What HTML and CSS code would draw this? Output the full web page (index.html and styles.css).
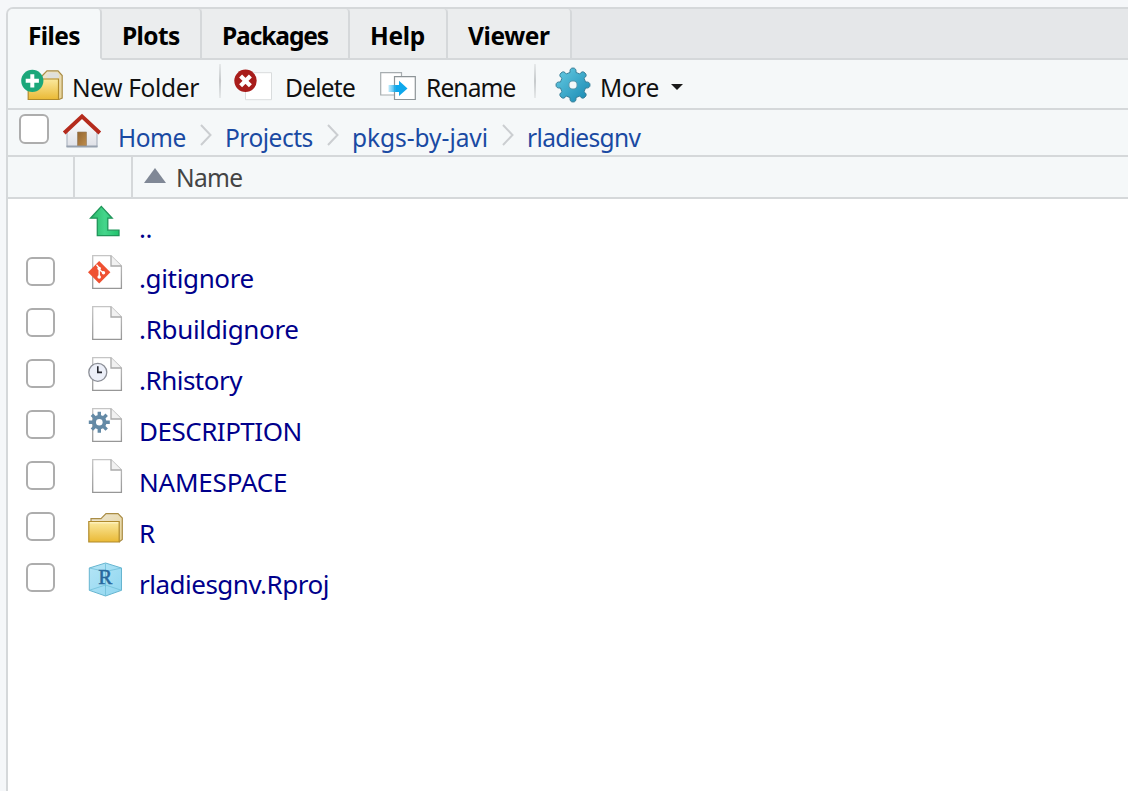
FILE: index.html
```html
<!DOCTYPE html>
<html lang="en">
<head>
<meta charset="utf-8">
<title>Files</title>
<link rel="stylesheet" href="styles.css">
</head>
<body>
<svg class="defs" aria-hidden="true">
  <defs>
    <linearGradient id="gold" x1="0" y1="0" x2="0" y2="1"><stop offset="0" stop-color="#fbe99e"/><stop offset="1" stop-color="#eab935"/></linearGradient>
    <linearGradient id="back" x1="0" y1="0" x2="1" y2="1"><stop offset="0" stop-color="#ece7d8"/><stop offset="1" stop-color="#e8d394"/></linearGradient>
    <linearGradient id="paper" x1="0" y1="0" x2="0" y2="1"><stop offset="0" stop-color="#c5c5c5"/><stop offset="1" stop-color="#979797"/></linearGradient>
    <linearGradient id="blue" x1="0" y1="0" x2="1" y2="1"><stop offset="0" stop-color="#68cde4"/><stop offset="1" stop-color="#1486b0"/></linearGradient>
    <linearGradient id="green" x1="0" y1="0" x2="1" y2="0"><stop offset="0" stop-color="#27b969"/><stop offset=".5" stop-color="#45d58b"/><stop offset="1" stop-color="#20c36c"/></linearGradient>
    <linearGradient id="arrow" x1="0" y1="0" x2="1" y2="0"><stop offset="0" stop-color="#5ecbf7" stop-opacity=".4"/><stop offset=".4" stop-color="#0fa8ec"/></linearGradient>
    <linearGradient id="door" x1="0" y1="0" x2="1" y2="1"><stop offset="0" stop-color="#94652f"/><stop offset="1" stop-color="#bd8c4c"/></linearGradient>
    <linearGradient id="wall" x1="0" y1="0" x2="0" y2="1"><stop offset="0" stop-color="#ffffff"/><stop offset="1" stop-color="#dfe1e7"/></linearGradient>
    <linearGradient id="cube" x1="0" y1="0" x2="1" y2="1"><stop offset="0" stop-color="#b5e5f6"/><stop offset="1" stop-color="#8fd6f0"/></linearGradient>
    <symbol id="page" viewBox="0 0 36 36">
      <path d="M4.7 1.7H23L33.4 12V34.3H4.7Z" fill="#fff" stroke="url(#paper)" stroke-width="1.3"/>
      <path d="M23 1.7V12H33.4" fill="#f1f1f1" stroke="#aaa" stroke-width="1.3"/>
    </symbol>
    <symbol id="folder" viewBox="0 0 36 36">
      <path d="M3 9V6.6H13L18 1.6H30L34.3 6V27.5L31 30" fill="url(#back)" stroke="#aa8d45" stroke-width="1.2"/>
      <path d="M.8 9.5H31.2V30H.8Z" fill="url(#gold)" stroke="#b08a2c" stroke-width="1.2"/>
      <path d="M1.8 10.8H30.2" stroke="#fff6cb"/>
    </symbol>
    <symbol id="cog" viewBox="-18 -18 36 36">
      <path d="M-3-12.5Q-3.5-17 0-17Q3.5-17 3-12.5Q4.8-12 6.7-11Q9.3-14.8 12-12Q14.8-9.3 11-6.7Q12-4.8 12.5-3Q17-3.5 17 0Q17 3.5 12.5 3Q12 4.8 11 6.7Q14.8 9.3 12 12Q9.3 14.8 6.7 11Q4.8 12 3 12.5Q3.5 17 0 17Q-3.5 17-3 12.5Q-4.8 12-6.7 11Q-9.3 14.8-12 12Q-14.8 9.3-11 6.7Q-12 4.8-12.5 3Q-17 3.5-17 0Q-17-3.5-12.5-3Q-12-4.8-11-6.7Q-14.8-9.3-12-12Q-9.3-14.8-6.7-11Q-4.8-12-3-12.5Z" fill="url(#blue)" stroke="#397f98" stroke-width="1"/>
      <circle r="4.1" fill="#f4f8f9" stroke="#5797ab"/>
    </symbol>
  </defs>
</svg>
<main class="pane">
  <nav class="tabs">
    <div class="tab tab-files active"><span>Files</span></div>
    <div class="tab tab-plots"><span>Plots</span></div>
    <div class="tab tab-packages"><span>Packages</span></div>
    <div class="tab tab-help"><span>Help</span></div>
    <div class="tab tab-viewer"><span>Viewer</span></div>
    <div class="tab-fill"></div>
  </nav>
  <div class="toolbar">
    <svg class="icon-new" viewBox="0 0 42 34">
      <path d="M20 9L26 2.8H37L41.2 7.5V30L38 31.5" fill="url(#back)" stroke="#aa8d45" stroke-width="1.2"/>
      <path d="M26.5 7L28.5 4.7H36L38 7V10H26Z" fill="#dfe0db"/>
      <path d="M7.2 11H37.5V31.5H7.2Z" fill="url(#gold)" stroke="#b08a2c" stroke-width="1.2"/>
      <circle cx="11.3" cy="12.8" r="11.1" fill="#1ba77a"/>
      <path d="M11.3 6.2V19.4M4.7 12.8H17.9" stroke="#fff" stroke-width="4"/>
    </svg>
    <span class="label new-label">New Folder</span>
    <i class="sep sep-one"></i>
    <svg class="icon-delete" viewBox="0 0 38 34">
      <path d="M11.5 4.7H37.5V31.7H11.5Z" fill="#fff" stroke="#d9dcdd"/>
      <circle cx="11.5" cy="12.8" r="11.2" fill="#a81d1b"/>
      <path d="M6.6 7.9L16.4 17.7M16.4 7.9L6.6 17.7" stroke="#fff" stroke-width="4.2"/>
    </svg>
    <span class="label delete-label">Delete</span>
    <svg class="icon-rename" viewBox="0 0 36 34">
      <path d="M.7 4.7H21.5V27H.7Z" fill="#fff" stroke="#a7adb0" stroke-width="1.2"/>
      <path d="M14.5 8.7H35.3V31.5H14.5Z" fill="#fff" stroke="#8d9497" stroke-width="1.2"/>
      <path d="M8.5 17H19V12.7L27.5 20.5L19 28V24H8.5Z" fill="url(#arrow)"/>
    </svg>
    <span class="label rename-label">Rename</span>
    <i class="sep sep-two"></i>
    <svg class="icon-gear"><use href="#cog"/></svg>
    <span class="label more-label">More</span>
    <svg class="caret" viewBox="0 0 12 6"><path d="M0 0H12L6 6Z"/></svg>
  </div>
  <div class="path">
    <i class="check path-check"></i>
    <svg class="home" viewBox="0 0 38 34">
      <path d="M4 16L19 3L34 16V32.5H4Z" fill="url(#wall)" stroke="#aeb6c2" stroke-width="1.2"/>
      <path d="M3.5 32.5H34.5" stroke="#98a2af" stroke-width="2"/>
      <path d="M14.5 18H23.5V31.5H14.5Z" fill="url(#door)" stroke="#93795a" stroke-width=".6"/>
      <path d="M1.2 19L19 2.4L36.8 19" fill="none" stroke="#b52b1d" stroke-width="4"/>
    </svg>
    <span class="label crumb crumb-home">Home</span>
    <svg class="chev" viewBox="0 0 12 22"><path d="M1 1L10.5 11L1 21"/></svg>
    <span class="label crumb crumb-projects">Projects</span>
    <svg class="chev" viewBox="0 0 12 22"><path d="M1 1L10.5 11L1 21"/></svg>
    <span class="label crumb crumb-pkgs">pkgs-by-javi</span>
    <svg class="chev" viewBox="0 0 12 22"><path d="M1 1L10.5 11L1 21"/></svg>
    <span class="label crumb crumb-repo">rladiesgnv</span>
  </div>
  <div class="head">
    <div class="head-check"></div>
    <div class="head-icon"></div>
    <svg class="sort" viewBox="0 0 22 15"><path d="M0 15L11 0L22 15Z"/></svg>
    <span class="label name-label">Name</span>
  </div>
  <div class="list">
    <div class="row">
      <i class="check none"></i>
      <svg class="file-icon" viewBox="0 0 36 36"><path d="M13.3 3.4L24.2 15.2H19.8V27.2H31V32.7H9.3V15.2H2.5Z" fill="url(#green)" stroke="#20955a" stroke-width="1.3"/></svg>
      <span class="label file f-up">..</span>
    </div>
    <div class="row">
      <i class="check"></i>
      <svg class="file-icon" viewBox="0 0 36 36"><use href="#page"/><path d="M11.2 7L22.4 18.2L11.2 29.4L0 18.2Z" fill="#ef5132"/><path d="M8.5 10.8L11.2 14V24M11.2 15.5L15.5 19" stroke="#fff" stroke-width="1.4" fill="none"/><circle cx="11.2" cy="14.5" r="1.8" fill="#fff"/><circle cx="11.2" cy="23" r="1.8" fill="#fff"/><circle cx="15.5" cy="18.7" r="1.7" fill="#fff"/></svg>
      <span class="label file f-git">.gitignore</span>
    </div>
    <div class="row">
      <i class="check"></i>
      <svg class="file-icon"><use href="#page"/></svg>
      <span class="label file f-build">.Rbuildignore</span>
    </div>
    <div class="row">
      <i class="check"></i>
      <svg class="file-icon" viewBox="0 0 36 36"><use href="#page"/><circle cx="9.8" cy="16.3" r="9" fill="#eceff8" stroke="#8b8e96" stroke-width="1.3"/><path d="M9.8 10.2V16.4H14" fill="none" stroke="#23252d" stroke-width="1.6"/></svg>
      <span class="label file f-hist">.Rhistory</span>
    </div>
    <div class="row">
      <i class="check"></i>
      <svg class="file-icon" viewBox="0 0 36 36"><use href="#page"/><g transform="translate(11.3 15.2)"><path d="M0-10.5V10.5M-10.5 0H10.5M-7.4-7.4L7.4 7.4M7.4-7.4L-7.4 7.4" stroke="#648aa6" stroke-width="3.4"/><circle r="7.2" fill="#648aa6"/><circle r="3.3" fill="#fff"/></g></svg>
      <span class="label file f-desc">DESCRIPTION</span>
    </div>
    <div class="row">
      <i class="check"></i>
      <svg class="file-icon"><use href="#page"/></svg>
      <span class="label file f-name">NAMESPACE</span>
    </div>
    <div class="row">
      <i class="check"></i>
      <svg class="file-icon"><use href="#folder" y="3"/></svg>
      <span class="label file f-r">R</span>
    </div>
    <div class="row">
      <i class="check"></i>
      <svg class="file-icon" viewBox="0 -2 36 36"><path d="M1.3 6L17.5 1L33.5 6V28.3L17.5 34L1.3 28.3Z" fill="url(#cube)" stroke="#66b5d0"/><path d="M1.3 6L17.5 9.5L33.5 6M17.5 1.5V25M1.3 28.3L17.5 23L33.5 28.3M17.5 9.5V34" fill="none" stroke="#70bfd8" stroke-width=".8"/><text class="cube-letter" x="10.2" y="21.5">R</text></svg>
      <span class="label file f-proj">rladiesgnv.Rproj</span>
    </div>
  </div>
</main>
</body>
</html>
```
FILE: styles.css
```css
* { box-sizing: border-box; }
body { margin: 0; padding: 7px 0 0 6px; height: 791px; overflow: hidden; background: #f5f7f9; font-family: "Noto Sans", "Open Sans", sans-serif; }
.defs { position: absolute; width: 0; height: 0; }
svg { display: block; flex: none; overflow: visible; }
.pane { height: 784px; border: 2px solid #d5d8da; border-width: 2px 0 0 2px; border-top-left-radius: 7px; background: #fff; overflow: hidden; }
.tabs { display: flex; height: 51px; background: #e5e7e9; }
.tab { flex: none; height: 51px; padding-left: 20px; border-right: 2px solid #d5d8da; border-bottom: 2px solid #d5d8da; background: #ebedee; border-top-right-radius: 4px; font-size: 24.5px; font-weight: 700; line-height: 53px; white-space: nowrap; color: #000; }
.tab.active { background: #f5f8f9; border-bottom-color: #f5f8f9; }
.tab-files { width: 94px; letter-spacing: -0.6px; }
.tab-plots { width: 100px; letter-spacing: -0.6px; }
.tab-packages { width: 148px; letter-spacing: -1.1px; }
.tab-help { width: 98px; letter-spacing: -0.3px; }
.tab-viewer { width: 124px; letter-spacing: -0.4px; }
.tab-fill { flex: 1; border-bottom: 2px solid #d5d8da; }
.label { flex: none; font-size: 24.5px; line-height: 36px; white-space: nowrap; }
.toolbar { display: flex; height: 50px; padding-left: 13px; background: #f5f8f9; border-bottom: 2px solid #d5d8da; }
.toolbar .label { margin-top: 10px; color: #111; }
.icon-new { width: 42px; height: 34px; margin: 8px 9px 0 0; }
.toolbar .new-label { width: 147px; letter-spacing: -0.35px; }
.sep { flex: none; width: 2px; height: 34px; margin-top: 4px; background: linear-gradient(#e6e9ea, #c6cacc 50%, #e6e9ea); }
.icon-delete { width: 38px; height: 34px; margin: 8px 13px 0 13px; }
.delete-label { width: 95px; letter-spacing: -0.75px; }
.icon-rename { width: 36px; height: 34px; margin: 8px 10px 0 0; }
.rename-label { width: 108px; letter-spacing: -0.85px; }
.icon-gear { width: 36px; height: 36px; margin: 7px 9px 0 19px; }
.more-label { width: 71px; letter-spacing: -0.4px; }
.caret { width: 12px; height: 6px; margin-top: 24px; fill: #1a1a1a; }
.path { display: flex; height: 47px; padding-left: 11px; background: #f5f8f9; border-bottom: 2px solid #d5d8da; }
.check { flex: none; width: 29px; height: 29px; border: 2px solid #adadad; border-radius: 6px; background: #fff; }
.path-check { width: 30px; height: 30px; margin: 4px 14px 0 0; }
.home { width: 38px; height: 34px; margin: 4px 17px 0 0; }
.crumb { margin-top: 10px; color: #1a4aa3; }
.crumb-home { width: 82px; letter-spacing: -0.5px; }
.crumb-projects { width: 102px; letter-spacing: -0.5px; }
.crumb-pkgs { width: 150px; letter-spacing: -0.05px; }
.crumb-repo { letter-spacing: -0.65px; }
.chev { width: 12px; height: 22px; margin: 14px 13px 0 0; fill: none; stroke: #cbced1; stroke-width: 2; }
.head { display: flex; height: 42px; background: #f5f8f9; border-bottom: 2px solid #d5d8da; }
.head-check { width: 67px; border-right: 2px solid #d5d8da; }
.head-icon { width: 58px; border-right: 2px solid #d5d8da; }
.sort { width: 22px; height: 15px; margin: 11px 10px 0 11px; fill: #808896; }
.name-label { margin-top: 3px; color: #444; letter-spacing: -0.7px; }
.row { display: flex; height: 51px; padding-left: 18px; }
.row .check { margin-top: 7px; }
.check.none { visibility: hidden; }
.file-icon { width: 36px; height: 36px; margin: 4px 15px 0 33px; }
.file { margin-top: 10px; color: #00008b; font-size: 26px; letter-spacing: -0.5px; }
.f-up { margin-top: 11px; }
.f-git { letter-spacing: -0.35px; }
.f-build { letter-spacing: -0.33px; }
.f-name { letter-spacing: -0.2px; }
.cube-letter { font: 400 21px "Liberation Serif", serif; fill: #28689d; stroke: #28689d; stroke-width: .5; }
```
